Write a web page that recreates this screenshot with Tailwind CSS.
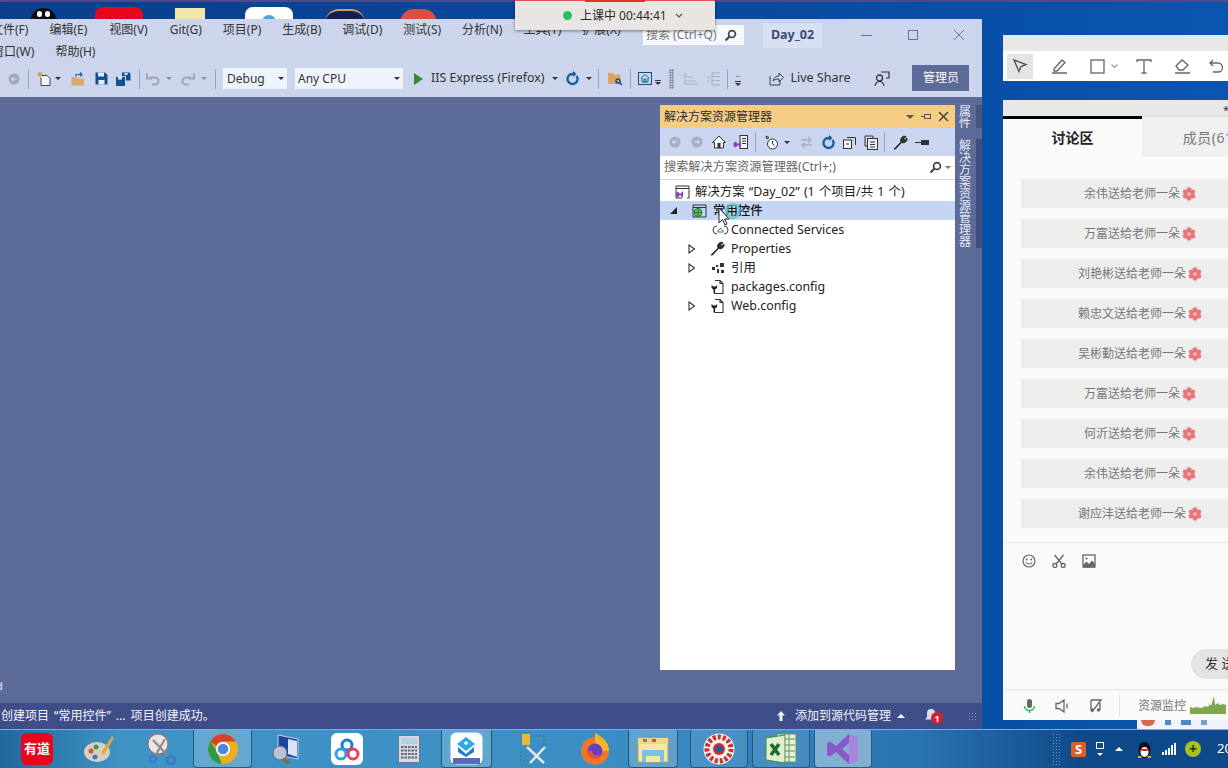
<!doctype html>
<html lang="zh-CN">
<head>
<meta charset="utf-8">
<title>Day_02 - Visual Studio</title>
<script src="https://cdn.jsdelivr.net/npm/@tailwindcss/browser@4"></script>
</head>
<body class="m-0 overflow-hidden">
<svg class="hidden">
  <symbol id="flower" viewBox="0 0 14 14">
    <g fill="#e8757a"><circle cx="7" cy="2.600" r="2.400"/><circle cx="7" cy="11.400" r="2.400"/><circle cx="3.200" cy="4.800" r="2.400"/><circle cx="10.800" cy="4.800" r="2.400"/><circle cx="3.200" cy="9.200" r="2.400"/><circle cx="10.800" cy="9.200" r="2.400"/><circle cx="7" cy="7" r="3.500"/></g>
    <circle cx="7" cy="7" r="1.800" fill="#f6c4bf"/>
  </symbol>
  <symbol id="config" viewBox="0 0 14 16">
    <path d="M5 1.500h5l3 3v10H4.500M10 1.500v3h3" fill="none" stroke="#333" stroke-width="1.100"/>
    <path d="M1.500 6v3l2 1.500v4h1.600v-4l2-1.500V6L5.600 7.500H3.400z" fill="#222"/>
  </symbol>
  <symbol id="tri" viewBox="0 0 8 10"><path d="M1 1l5.500 4L1 9z" fill="#fff" stroke="#333" stroke-width="1.100"/></symbol>
</svg>

<div class="relative w-[1228px] h-[768px] overflow-hidden bg-gradient-to-r from-[#0a3f8e] via-[#06489c] to-[#0a55ae] font-['Noto_Sans','Noto_Sans_CJK_SC',sans-serif]">
  <div class="h-[2px] bg-[#54468c]"></div>

  <!-- desktop icons peeking over the window -->
  <div class="absolute left-0 top-[2px] flex h-[17px] w-[480px] items-start overflow-hidden">
    <div class="ml-[30px] mt-[6px] flex h-[28px] w-[27px] justify-center gap-[3px] rounded-full bg-[#0b0b12] pt-[3px]"><span class="h-[6px] w-[5px] rounded-full bg-white"></span><span class="h-[6px] w-[5px] rounded-full bg-white"></span></div>
    <div class="ml-[38px] mt-[5px] h-[30px] w-[48px] rounded-lg bg-[#e8061c]"></div>
    <div class="ml-[32px] mt-[6px] h-[20px] w-[30px] bg-[#f2e6a8]"></div>
    <div class="ml-[40px] mt-[5px] flex h-[30px] w-[48px] justify-center rounded-lg bg-white pt-[8px]"><span class="h-[14px] w-[14px] rounded-full bg-[#4aa8e0]"></span></div>
    <div class="ml-[32px] mt-[7px] h-[28px] w-[40px] rounded-full border-t-2 border-[#c9a25a] bg-[#14204f]"></div>
    <div class="ml-[35px] mt-[7px] h-[28px] w-[37px] rounded-full bg-[#d8503f]"></div>
  </div>

  <!-- Visual Studio window -->
  <div class="absolute left-0 top-[19px] flex h-[710px] w-[982px] flex-col bg-[#5d6b99] text-[12px] text-[#2e3440]">
    <div class="relative h-[78px] shrink-0 bg-[#ccd5ec]">
      <div class="-ml-[9px] flex h-[20px] items-end gap-[21px] leading-[18px] text-[#333]">
        <span>文件(F)</span><span>编辑(E)</span><span class="pl-px">视图(V)</span><span class="pl-px">Git(G)</span><span>项目(P)</span><span>生成(B)</span><span>调试(D)</span><span>测试(S)</span><span>分析(N)</span><span>工具(T)</span><span>扩展(X)</span>
      </div>
      <div class="-ml-[8px] flex h-[22px] items-end gap-[21px] leading-[18px] text-[#333]">
        <span>窗口(W)</span><span>帮助(H)</span>
      </div>
      <div class="absolute left-[643px] top-[6px] flex h-[20px] w-[101px] items-center justify-between bg-[#f6f8fd] pl-[3px] pr-[7px] text-[#777]">
        <span>搜索 (Ctrl+Q)</span>
        <svg width="13" height="13" viewBox="0 0 13 13"><circle cx="8" cy="5" r="3.400" fill="none" stroke="#444" stroke-width="1.700"/><path d="M5.500 7.500L1.500 11.500" stroke="#444" stroke-width="2.200"/></svg>
      </div>
      <div class="absolute left-[763px] top-[4px] flex h-[25px] w-[59px] items-center justify-center bg-[#d7dff3] text-[12.5px] font-bold text-[#3b4a78]">Day_02</div>
      <div class="absolute left-[860px] top-[6px] flex w-[106px] items-center justify-between text-[#6a7596]">
        <svg width="14" height="20" viewBox="0 0 14 20"><path d="M1 10.500h11" stroke="currentColor"/></svg>
        <svg width="12" height="20" viewBox="0 0 12 20"><rect x="1.500" y="5.500" width="9" height="9" fill="none" stroke="currentColor"/></svg>
        <svg width="14" height="20" viewBox="0 0 14 20"><path d="M2 5l10 10M12 5L2 15" stroke="currentColor"/></svg>
      </div>

      <!-- standard toolbar -->
      <div class="absolute left-0 top-[49px] flex h-[21px] w-full items-center text-[#333]">
        <svg class="ml-[8px]" width="12" height="12" viewBox="0 0 12 12"><circle cx="6" cy="6" r="5.500" fill="#a4a9b8"/><path d="M8.500 6h-5M5.500 4L3.500 6l2 2" stroke="#e2e5ee" fill="none"/></svg>
        <span class="ml-[8px] h-[20px] w-px bg-[#99a3bf]"></span>
        <svg class="ml-[8px]" width="15" height="16" viewBox="0 0 15 16"><path d="M5 4.500h5l3 3v7H4v-8" fill="#f4f6fb" stroke="#444"/><path d="M3 1v5M.5 3.500h5M1 1.500l4 4M5 1.500l-4 4" stroke="#c8912c"/></svg>
        <span class="ml-[3px] border-x-[3px] border-t-[3px] border-x-transparent border-t-[#333]"></span>
        <svg class="ml-[10px]" width="15" height="14" viewBox="0 0 15 14"><path d="M.5 5h5l1 1.500h6.500v7H.5z" fill="#dcaa6c"/><path d="M5 4.500V2.500h6M9 .5l2 2-2 2" stroke="#1a6aa8" fill="none" stroke-width="1.200"/></svg>
        <svg class="ml-[9px]" width="13" height="13" viewBox="0 0 13 13"><path d="M.5.500h9.500l2.500 2.500v9.500H.5z" fill="#10528f"/><rect x="3" y=".5" width="6" height="4" fill="#e6ecf8"/><rect x="3.500" y="8" width="6" height="4.500" fill="#e6ecf8"/></svg>
        <svg class="ml-[8px]" width="15" height="14" viewBox="0 0 15 14"><path d="M0 5h9v9H0z" fill="#10528f"/><path d="M6 .5h7.500l1 1v7H10V4H6z" fill="#10528f"/><rect x="2" y="5" width="4" height="2.500" fill="#e6ecf8"/><rect x="8.500" y="1" width="3" height="2" fill="#e6ecf8"/></svg>
        <span class="ml-[8px] h-[20px] w-px bg-[#99a3bf]"></span>
        <svg class="ml-[6px]" width="14" height="14" viewBox="0 0 14 14"><path d="M4 5.500h5a3.500 3.500 0 0 1 0 7H6M1 1.500v5h5" fill="none" stroke="#a0a6b8" stroke-width="2"/></svg>
        <span class="ml-[6px] border-x-[3px] border-t-[3px] border-x-transparent border-t-[#8a90a4]"></span>
        <svg class="ml-[9px]" width="14" height="14" viewBox="0 0 14 14"><path d="M10 5.500H5a3.500 3.500 0 0 0 0 7h3M13 1.500v5H8" fill="none" stroke="#a0a6b8" stroke-width="2"/></svg>
        <span class="ml-[6px] border-x-[3px] border-t-[3px] border-x-transparent border-t-[#8a90a4]"></span>
        <span class="ml-[8px] h-[20px] w-px bg-[#99a3bf]"></span>
        <div class="ml-[7px] flex h-[21px] w-[64px] items-center justify-between bg-[#eff3fb] pl-[4px] pr-[3px]"><span>Debug</span><span class="border-x-[3px] border-t-[3px] border-x-transparent border-t-[#333]"></span></div>
        <div class="ml-[8px] flex h-[21px] w-[108px] items-center justify-between bg-[#eff3fb] pl-[3px] pr-[3px]"><span>Any CPU</span><span class="border-x-[3px] border-t-[3px] border-x-transparent border-t-[#333]"></span></div>
        <span class="ml-[11px] border-y-[6px] border-l-[9px] border-y-transparent border-l-[#2f8a3c]"></span>
        <span class="ml-[8px] whitespace-nowrap text-[12.4px]">IIS Express (Firefox)</span>
        <span class="ml-[8px] border-x-[3px] border-t-[3px] border-x-transparent border-t-[#333]"></span>
        <svg class="ml-[7px]" width="14" height="15" viewBox="0 0 14 15"><path d="M11.500 5A5 5 0 1 1 7 3H10" fill="none" stroke="#0d5fa8" stroke-width="2.300"/><path d="M8 0l3.500 3L8 6z" fill="#0d5fa8"/></svg>
        <span class="ml-[7px] border-x-[3px] border-t-[3px] border-x-transparent border-t-[#333]"></span>
        <span class="ml-[6px] h-[20px] w-px bg-[#99a3bf]"></span>
        <svg class="ml-[9px]" width="15" height="14" viewBox="0 0 15 14"><path d="M0 1h5l1 1.500h6.500V12H0z" fill="#dca55e"/><circle cx="10" cy="9" r="2" fill="none" stroke="#10528f" stroke-width="1.400"/><path d="M11.500 10.500L14 13" stroke="#10528f" stroke-width="1.500"/></svg>
        <span class="ml-[7px] h-[20px] w-px bg-[#99a3bf]"></span>
        <svg class="ml-[7px]" width="14" height="13" viewBox="0 0 14 13"><rect x=".5" y=".5" width="13" height="12" fill="none" stroke="#174f80"/><path d="M7 2.500L3 6h1v4h6V6h1zM6 7h2v3H6z" fill="none" stroke="#1a6aa8"/></svg>
        <span class="ml-[3px] mt-[6px] flex h-[7px] w-[6px] flex-col justify-end"><span class="h-px w-full bg-[#333]"></span><span class="mt-px border-x-[3px] border-t-[3px] border-x-transparent border-t-[#333]"></span></span>
        <span class="ml-[8px] h-[20px] w-[5px] bg-[radial-gradient(#7d869f_1px,transparent_1px)] bg-[length:2.500px_2.500px]"></span>
        <svg class="ml-[10px]" width="15" height="14" viewBox="0 0 15 14"><path d="M1 1v11h13M3 5h6M3 9h9M1 3l2 2" fill="none" stroke="#a8aebf"/></svg>
        <svg class="ml-[7px]" width="15" height="14" viewBox="0 0 15 14"><path d="M14 1H6v12h8M6 4.500h8M6 8.500h8M1 5h3M1 9h3" fill="none" stroke="#a8aebf"/></svg>
        <span class="ml-[6px] h-[20px] w-px bg-[#99a3bf]"></span>
        <span class="ml-[6px] flex w-[7px] flex-col items-center gap-[4px]"><span class="text-[8px] leading-[6px] text-[#333]">..</span><span class="h-px w-[6px] bg-[#333]"></span><span class="-mt-[3px] border-x-[3px] border-t-[3px] border-x-transparent border-t-[#333]"></span></span>
        <svg class="ml-[28px]" width="15" height="15" viewBox="0 0 15 15"><path d="M1 5v9h10V9M4 10c.5-3 3-5 6-5V2l4.500 4.500L10 11V8c-2.500 0-4.500.5-6 2z" fill="none" stroke="#3c4252"/></svg>
        <span class="ml-[6px] whitespace-nowrap text-[12.5px]">Live Share</span>
        <svg class="ml-[24px]" width="16" height="16" viewBox="0 0 16 16"><circle cx="5.500" cy="7" r="3" fill="none" stroke="#333" stroke-width="1.300"/><path d="M1 15c.5-3 2.200-4.500 4.500-4.500S9.500 12 10 15M7 1h8v6h-3" fill="none" stroke="#333" stroke-width="1.200"/></svg>
        <div class="ml-[22px] -mt-[2px] flex h-[26px] w-[57px] items-center justify-center bg-[#5d6b99] text-white">管理员</div>
      </div>
    </div>

    <div class="relative flex min-h-0 flex-1">
      <!-- empty document well -->
      <div class="relative w-[660px] shrink-0">
        <span class="absolute bottom-[37px] -left-[4px] text-[11px] leading-[12px] text-[#e8ecf6]">d</span>
      </div>

      <!-- solution explorer -->
      <div class="mt-[8px] mb-[59px] flex w-[295px] shrink-0 flex-col bg-white">
        <div class="flex h-[23px] shrink-0 items-center bg-[#f5cc84] pl-[4px] pr-[6px] text-[#2c2c2c]">
          <span class="flex-1">解决方案资源管理器</span>
          <span class="border-x-[4px] border-t-[4px] border-x-transparent border-t-[#555]"></span>
          <svg class="ml-[7px]" width="11" height="11" viewBox="0 0 11 11"><path d="M0 5.500h3M3.500 3v5M3.500 3.500h6M3.500 7.500h6M9.500 3v5" fill="none" stroke="#555"/></svg>
          <svg class="ml-[6px]" width="11" height="11" viewBox="0 0 11 11"><path d="M1 1l9 9M10 1l-9 9" stroke="#444" stroke-width="1.500"/></svg>
        </div>
        <div class="flex h-[28px] shrink-0 items-center bg-[#ccd5f0] pl-[9px]">
          <svg width="12" height="12" viewBox="0 0 12 12"><circle cx="6" cy="6" r="5.500" fill="#a8aebf"/><path d="M8.500 6h-5M5.500 4L3.500 6l2 2" stroke="#e2e5ee" fill="none"/></svg>
          <svg class="ml-[10px]" width="12" height="12" viewBox="0 0 12 12"><circle cx="6" cy="6" r="5.500" fill="#a8aebf"/><path d="M3.500 6h5M6.500 4l2 2-2 2" stroke="#e2e5ee" fill="none"/></svg>
          <svg class="ml-[9px]" width="14" height="14" viewBox="0 0 14 14"><path d="M7 1L.5 7.500H2.500V13h9V7.500h2z" fill="#f4f6fb" stroke="#333"/><rect x="5.500" y="8" width="3" height="5" fill="#333"/></svg>
          <svg class="ml-[7px]" width="15" height="14" viewBox="0 0 15 14"><rect x="7" y=".5" width="7.500" height="13" fill="#f4f6fb" stroke="#333"/><path d="M9 3.500h4M9 6h4M9 8.500h4" stroke="#333"/><path d="M.5 8l2-1.500L5 9l3-3v7l-3-3-2.500 2.500-2-1.500z" fill="#8a3ec0"/></svg>
          <span class="ml-[7px] h-[20px] w-px bg-[#99a3bf]"></span>
          <svg class="ml-[9px]" width="15" height="15" viewBox="0 0 15 15"><circle cx="7.500" cy="9" r="5" fill="#f4f6fb" stroke="#333"/><path d="M7.500 6v3l2 1.500M1 1l3 1.500L2 4z" fill="none" stroke="#333"/></svg>
          <span class="ml-[4px] border-x-[3px] border-t-[3px] border-x-transparent border-t-[#333]"></span>
          <svg class="ml-[10px]" width="13" height="13" viewBox="0 0 13 13"><path d="M1 4h9M8 1l3 3-3 3M12 9H3M5 6L2 9l3 3" fill="none" stroke="#a8aebf" stroke-width="1.300"/></svg>
          <svg class="ml-[8px]" width="14" height="15" viewBox="0 0 14 15"><path d="M11.500 5A5 5 0 1 1 7 3H10" fill="none" stroke="#0d5fa8" stroke-width="2.300"/><path d="M8 0l3.500 3L8 6z" fill="#0d5fa8"/></svg>
          <svg class="ml-[8px]" width="13" height="13" viewBox="0 0 13 13"><rect x=".5" y="4" width="8" height="8.500" fill="#eef1f8" stroke="#333"/><path d="M4 1.500h8.500V9M3 8h3" fill="none" stroke="#333"/></svg>
          <svg class="ml-[8px]" width="14" height="15" viewBox="0 0 14 15"><path d="M1 1h8v2M1 1v10h2" fill="none" stroke="#333"/><rect x="3.500" y="3.500" width="10" height="11" fill="#eef1f8" stroke="#333"/><path d="M6 7h5M6 9.500h5M6 12h5" stroke="#333"/></svg>
          <span class="ml-[6px] h-[20px] w-px bg-[#99a3bf]"></span>
          <svg class="ml-[8px]" width="15" height="15" viewBox="0 0 15 15"><path d="M1 14l7-7a4 4 0 0 1 5-5.500L10.500 4l1 1L14 3a4 4 0 0 1-5.500 4.500L2.500 14z" fill="#2c2c2c" stroke="#2c2c2c"/></svg>
          <svg class="ml-[7px]" width="15" height="7" viewBox="0 0 15 7"><path d="M0 3.500h6" stroke="#333"/><rect x="6" y="1" width="8" height="5" fill="#333"/></svg>
        </div>
        <div class="flex h-[24px] shrink-0 items-center justify-between border-b border-[#d0d6e6] bg-white pl-[4px] pr-[4px] text-[12.2px] text-[#666]">
          <span>搜索解决方案资源管理器(Ctrl+;)</span>
          <span class="flex items-center gap-[3px]">
            <svg width="13" height="13" viewBox="0 0 13 13"><circle cx="8" cy="5" r="3.400" fill="none" stroke="#444" stroke-width="1.700"/><path d="M5.500 7.500L1.500 11.500" stroke="#444" stroke-width="2.200"/></svg>
            <span class="border-x-[3px] border-t-[3px] border-x-transparent border-t-[#777]"></span>
          </span>
        </div>

        <div class="relative pt-[2px] text-[12.4px] leading-[19px] text-[#222]">
          <div class="flex h-[19px] items-center pl-[15px]">
            <svg width="15" height="14" viewBox="0 0 15 14"><path d="M7 13H1V1h13v12h-2M1 3.500h13" fill="none" stroke="#333"/><path d="M1 8l2-1.500L5 9l3-3v7l-3-3-2 2.500L1 11z" fill="#8a3ec0"/></svg>
            <span class="ml-[5px] whitespace-nowrap [word-spacing:1px]">解决方案 “Day_02” (1 个项目/共 1 个)</span>
          </div>
          <div class="flex h-[19px] items-center bg-[#c5d6f4] pl-[10px]">
            <span class="mr-[8px] border-b-[7px] border-l-[7px] border-b-[#222] border-l-transparent"></span>
            <svg class="ml-[7px]" width="15" height="14" viewBox="0 0 15 14"><path d="M1 1h13v12H1zM1 3.500h13" fill="none" stroke="#333"/><circle cx="6" cy="8.500" r="4" fill="#5fbf6a" stroke="#1f7a30"/><path d="M2 8.500h8M6 4.500v8" stroke="#1f7a30"/></svg>
            <span class="ml-[6px] font-medium text-[#111]">常用控件</span>
          </div>
          <div class="flex h-[19px] items-center pl-[50px]">
            <svg width="21" height="14" viewBox="0 0 21 14"><path d="M7 3a4 4 0 1 0 0 8M14 3a4 4 0 1 1 0 8" fill="none" stroke="#444"/><path d="M10.500 5l-3 4h6z" fill="none" stroke="#2a9a3c"/></svg>
            <span>Connected Services</span>
          </div>
          <div class="flex h-[19px] items-center pl-[28px]">
            <svg width="8" height="10"><use href="#tri"/></svg>
            <svg class="ml-[14px]" width="15" height="15" viewBox="0 0 15 15"><path d="M1 14l7-7a4 4 0 0 1 5-5.500L10.500 4l1 1L14 3a4 4 0 0 1-5.500 4.500L2.500 14z" fill="#2c2c2c" stroke="#2c2c2c"/></svg>
            <span class="ml-[6px]">Properties</span>
          </div>
          <div class="flex h-[19px] items-center pl-[28px]">
            <svg width="8" height="10"><use href="#tri"/></svg>
            <svg class="ml-[15px]" width="14" height="12" viewBox="0 0 14 12"><path d="M9 1h4v4H9zM1 5h3v3H1zM6 7h2v4H6zM10 8h3v3h-3zM5 3h2v2H5z" fill="#333"/></svg>
            <span class="ml-[6px]">引用</span>
          </div>
          <div class="flex h-[19px] items-center pl-[50px]">
            <svg width="14" height="16"><use href="#config"/></svg>
            <span class="ml-[7px]">packages.config</span>
          </div>
          <div class="flex h-[19px] items-center pl-[28px]">
            <svg width="8" height="10"><use href="#tri"/></svg>
            <svg class="ml-[14px]" width="14" height="16"><use href="#config"/></svg>
            <span class="ml-[7px]">Web.config</span>
          </div>
          <!-- mouse pointer over the selected row -->
          <svg class="absolute left-[56px] top-[22px]" width="30" height="30" viewBox="0 0 30 30">
            <circle cx="17" cy="9" r="6.500" fill="none" stroke="#56c8c0" stroke-width="3" opacity=".75"/>
            <path d="M3 6v15l3.500-3.500L9 23l2-1-2.500-5H13z" fill="#fff" stroke="#223" stroke-width="1"/>
          </svg>
        </div>
      </div>

      <!-- auto-hide tabs -->
      <div class="mt-[8px] flex w-[27px] shrink-0 flex-col text-[12px] leading-[17px] text-[#e6ebf7]">
        <div class="flex h-[23px] justify-end bg-[#47567f]">
          <div class="mr-[6px] flex w-[21px] items-center overflow-hidden whitespace-nowrap bg-[#5d6b99] pr-[3px] [writing-mode:vertical-rl]">属性</div>
        </div>
        <div class="mt-[11px] flex h-[109px] justify-end bg-[#3f4e7e]">
          <div class="mr-[6px] flex w-[21px] items-center overflow-hidden whitespace-nowrap bg-[#5d6b99] pr-[3px] [writing-mode:vertical-rl]">解决方案资源管理器</div>
        </div>
      </div>

      <!-- status bar -->
      <div class="absolute inset-x-0 bottom-0 flex h-[26px] items-center bg-[#3f4d88] text-[#f2f4fa]">
        <span class="flex-1 whitespace-nowrap pl-px [word-spacing:2px]">创建项目 “常用控件” ... 项目创建成功。</span>
        <svg width="10" height="12" viewBox="0 0 10 12"><path d="M5 1L1 5.500h2.500V11h3V5.500H9z" fill="#eef1f8"/></svg>
        <span class="ml-[9px]">添加到源代码管理</span>
        <span class="ml-[6px] border-x-[4px] border-b-[4px] border-x-transparent border-b-white"></span>
        <span class="relative ml-[19px] h-[14px] w-[14px]">
          <svg width="14" height="14" viewBox="0 0 14 14"><path d="M7 0a4 4 0 0 1 4 4v4l2 2.500H1L3 8V4a4 4 0 0 1 4-4z" fill="#d8deec"/></svg>
          <span class="absolute left-[7px] top-[3px] flex h-[12px] w-[12px] items-center justify-center rounded-full bg-[#d61f2a] text-[9px] font-bold leading-[9px] text-white">1</span>
        </span>
        <span class="ml-[30px] mr-[5px] h-[9px] w-[9px] bg-[radial-gradient(#8a96bc_1px,transparent_1px)] bg-[length:3px_3px]"></span>
      </div>
    </div>
  </div>

  <!-- class timer -->
  <div class="absolute left-[515px] top-0 flex h-[30px] w-[200px] flex-col bg-[#e9e5e3] shadow-[0_1px_3px_rgba(0,0,0,0.45)]">
    <div class="flex h-px justify-center bg-[#e05050]"><span class="h-[2px] w-[60px] bg-[#e23030]"></span></div>
    <div class="flex flex-1 items-center pl-[48px] text-[12px] text-[#2a2a2a]">
      <span class="mr-[8px] h-[9px] w-[9px] rounded-full bg-[#22c064]"></span>
      <span class="whitespace-nowrap">上课中 00:44:41</span>
      <svg class="ml-[8px]" width="8" height="6" viewBox="0 0 8 6"><path d="M1 1l3 3 3-3" fill="none" stroke="#555" stroke-width="1.200"/></svg>
    </div>
  </div>

  <!-- whiteboard tools window -->
  <div class="absolute left-[1003px] top-[35px] flex h-[46px] w-[225px] flex-col overflow-hidden bg-white">
    <div class="h-[16px] bg-[#e8e8e8]"></div>
    <div class="flex flex-1 items-center pl-[4px] text-[#666]">
      <div class="flex h-[25px] w-[26px] shrink-0 items-center justify-center bg-[#e4e4e4]">
        <svg width="16" height="16" viewBox="0 0 16 16"><path d="M2 2l12 4.500-5 2-2 5z" fill="none" stroke="#555" stroke-width="1.400"/></svg>
      </div>
      <svg class="ml-[18px] shrink-0" width="17" height="16" viewBox="0 0 17 16"><path d="M3 11L11 2l3 2.500-8 8.500H3zM1 15h15" fill="none" stroke="#666" stroke-width="1.300"/></svg>
      <svg class="ml-[22px] shrink-0" width="15" height="15" viewBox="0 0 15 15"><rect x="1" y="1" width="13" height="13" fill="none" stroke="#666" stroke-width="1.300"/></svg>
      <svg class="ml-[6px] shrink-0" width="7" height="5" viewBox="0 0 7 5"><path d="M.5.500l3 3 3-3" fill="none" stroke="#999" stroke-width="1.200"/></svg>
      <svg class="ml-[18px] shrink-0" width="16" height="15" viewBox="0 0 16 15"><path d="M1 3V1h14v2M8 1v13M5.500 14h5" fill="none" stroke="#666" stroke-width="1.300"/></svg>
      <svg class="ml-[22px] shrink-0" width="17" height="16" viewBox="0 0 17 16"><path d="M2 8l6-6 6 5-5 5H5zM1 15h15" fill="none" stroke="#666" stroke-width="1.300"/></svg>
      <svg class="ml-[18px] shrink-0" width="15" height="15" viewBox="0 0 15 15"><path d="M4 1L1 4l3 3M1 4h8a4.500 4.500 0 0 1 0 9H4" fill="none" stroke="#666" stroke-width="1.300"/></svg>
    </div>
  </div>

  <!-- chat window -->
  <div class="absolute left-[1003px] top-[100px] flex h-[620px] w-[225px] flex-col overflow-hidden bg-[#fafafa]">
    <div class="flex h-[16px] shrink-0 justify-end bg-[#e8e8e8] text-[11px] leading-[20px] text-[#333]"><span class="-mr-[1px]">*</span></div>
    <div class="flex h-[41px] shrink-0 text-[14px]">
      <div class="flex w-[139px] shrink-0 items-center justify-center border-t-[3px] border-black bg-[#fafafa] pb-[2px] font-bold text-[#222]">讨论区</div>
      <div class="flex w-[140px] shrink-0 items-center justify-center border-t border-[#e0e0e0] bg-[#f0f0f0] pr-[3px] tracking-[0.5px] text-[#777]">成员(61)</div>
    </div>
    <div class="flex w-[238px] shrink-0 flex-col gap-[11px] pl-[18px] pt-[22px] text-[12px] text-[#777]">
      <div class="flex h-[29px] w-[238px] shrink-0 items-center justify-center gap-[2px] bg-[#ededed] pt-px">余伟送给老师一朵<svg width="14" height="14"><use href="#flower"/></svg></div>
      <div class="flex h-[29px] w-[238px] shrink-0 items-center justify-center gap-[2px] bg-[#ededed] pt-px">万富送给老师一朵<svg width="14" height="14"><use href="#flower"/></svg></div>
      <div class="flex h-[29px] w-[238px] shrink-0 items-center justify-center gap-[2px] bg-[#ededed] pt-px">刘艳彬送给老师一朵<svg width="14" height="14"><use href="#flower"/></svg></div>
      <div class="flex h-[29px] w-[238px] shrink-0 items-center justify-center gap-[2px] bg-[#ededed] pt-px">赖忠文送给老师一朵<svg width="14" height="14"><use href="#flower"/></svg></div>
      <div class="flex h-[29px] w-[238px] shrink-0 items-center justify-center gap-[2px] bg-[#ededed] pt-px">吴彬勤送给老师一朵<svg width="14" height="14"><use href="#flower"/></svg></div>
      <div class="flex h-[29px] w-[238px] shrink-0 items-center justify-center gap-[2px] bg-[#ededed] pt-px">万富送给老师一朵<svg width="14" height="14"><use href="#flower"/></svg></div>
      <div class="flex h-[29px] w-[238px] shrink-0 items-center justify-center gap-[2px] bg-[#ededed] pt-px">何沂送给老师一朵<svg width="14" height="14"><use href="#flower"/></svg></div>
      <div class="flex h-[29px] w-[238px] shrink-0 items-center justify-center gap-[2px] bg-[#ededed] pt-px">余伟送给老师一朵<svg width="14" height="14"><use href="#flower"/></svg></div>
      <div class="flex h-[29px] w-[238px] shrink-0 items-center justify-center gap-[2px] bg-[#ededed] pt-px">谢应沣送给老师一朵<svg width="14" height="14"><use href="#flower"/></svg></div>
    </div>
    <div class="mt-[14px] border-t border-[#ebebeb]"></div>
    <div class="flex h-[34px] shrink-0 items-center gap-[16px] pl-[19px] pt-[2px]">
      <svg width="14" height="14" viewBox="0 0 14 14"><circle cx="7" cy="7" r="6" fill="none" stroke="#666" stroke-width="1.200"/><circle cx="4.800" cy="5.500" r=".9" fill="#666"/><circle cx="9.200" cy="5.500" r=".9" fill="#666"/><path d="M4 8.500c1.500 2 4.500 2 6 0" fill="none" stroke="#666" stroke-width="1.200"/></svg>
      <svg width="14" height="14" viewBox="0 0 14 14"><circle cx="2.800" cy="11.500" r="2" fill="none" stroke="#666" stroke-width="1.300"/><circle cx="11.200" cy="11.500" r="2" fill="none" stroke="#666" stroke-width="1.300"/><path d="M4 10L11.500 1M10 10L2.500 1" stroke="#666" stroke-width="1.300"/></svg>
      <svg width="14" height="14" viewBox="0 0 14 14"><rect x="1" y="1" width="12" height="12" fill="none" stroke="#666" stroke-width="1.300"/><circle cx="4.500" cy="4.500" r="1.100" fill="#666"/><path d="M1 11l3.500-3.500L7 10l3-3.500 3 3.500v3.500H1z" fill="#666"/></svg>
    </div>
    <div class="flex flex-1 items-end pb-[10px] pl-[188px]">
      <div class="flex h-[30px] w-[80px] shrink-0 items-center rounded-full bg-[#e4e4e4] pl-[14px] text-[13px] text-[#333]">发 送</div>
    </div>
    <div class="flex h-[31px] shrink-0 items-center border-t border-[#e4e4e4] pl-[20px] pt-[2px] text-[12px] text-[#777]">
      <svg class="shrink-0" width="13" height="16" viewBox="0 0 13 16"><rect x="4" y="1" width="5" height="9" rx="2.500" fill="#666"/><path d="M1.500 8c0 6 10 6 10 0M6.500 12v3" fill="none" stroke="#2fbf4f" stroke-width="1.500"/></svg>
      <svg class="ml-[19px] shrink-0" width="15" height="14" viewBox="0 0 15 14"><path d="M1 4.500v5h3l5 3.500V1L4 4.500zM12 4.500v5" fill="none" stroke="#666" stroke-width="1.300"/></svg>
      <svg class="ml-[18px] shrink-0" width="14" height="14" viewBox="0 0 14 14"><path d="M4 13l9-12H3M3 1v9M12 4v7" fill="none" stroke="#666" stroke-width="1.300"/><circle cx="4" cy="11" r="1.700" fill="#666"/><circle cx="10.500" cy="11" r="1.700" fill="#666"/></svg>
      <span class="ml-[17px] h-[22px] w-px shrink-0 bg-[#e4e4e4]"></span>
      <span class="ml-[18px] whitespace-nowrap">资源监控</span>
      <svg class="ml-[4px] -mt-[2px] shrink-0" width="40" height="18" viewBox="0 0 40 18"><path d="M0 18V11l3 1 4-1 4 1 5-2 2 1 2-3 1 2 3-10 1 9 3-2 2 2 3-1 3 1v9z" fill="#7fa650"/></svg>
    </div>
  </div>

  <!-- window peeking out under the chat -->
  <div class="absolute left-[1137px] top-[720px] flex h-[9px] w-[91px] items-start gap-[10px] overflow-hidden bg-[#f0f4fa] pl-[4px]">
    <span class="h-[6px] w-[14px] rounded-b-full bg-[#d86a4a]"></span><span class="h-[5px] w-[6px] bg-[#4b8ac8]"></span><span class="h-[5px] w-[10px] bg-[#4b8ac8]"></span><span class="h-[5px] w-[6px] bg-[#7aa0d0]"></span>
  </div>

  <!-- taskbar -->
  <div class="absolute inset-x-0 bottom-0 flex h-[39px] items-center border-t border-[#dc8c96] bg-[linear-gradient(90deg,#22689c_0%,#3f94c6_10%,#3a8ec4_50%,#2a74b0_75%,#0e4a8a_88%,#0e4a8a_100%)] text-white">
    <div class="ml-[6px] flex h-[30px] w-[62px] shrink-0 items-center justify-center"><div class="flex h-[32px] w-[32px] items-center justify-center rounded-md bg-[#e8061c] text-[13px] font-bold">有道</div></div>
    <div class="flex w-[62px] shrink-0 items-center justify-center">
      <svg width="32" height="32" viewBox="0 0 32 32"><ellipse cx="14" cy="19" rx="13" ry="10" fill="#d9cfc0"/><circle cx="8" cy="18" r="2.500" fill="#d8503f"/><circle cx="13" cy="14" r="2.500" fill="#3c9a4c"/><circle cx="12" cy="24" r="2.500" fill="#3a78c8"/><path d="M18 20L29 3l2 2-10 17z" fill="#e0a64a"/></svg>
    </div>
    <div class="flex w-[62px] shrink-0 items-center justify-center">
      <svg width="32" height="32" viewBox="0 0 32 32"><circle cx="13" cy="11" r="10" fill="#e8e4e0" stroke="#b06060"/><path d="M8 7l16 17M20 6L10 23" stroke="#888" stroke-width="2"/><circle cx="26" cy="27" r="4" fill="none" stroke="#3a78c8" stroke-width="2.500"/><circle cx="8" cy="26" r="3" fill="none" stroke="#3a78c8" stroke-width="2"/></svg>
    </div>
    <div class="ml-px flex h-[38px] w-[59px] shrink-0 items-center justify-center rounded-b-sm border border-t-0 border-[#1c5a80] bg-white/20">
      <svg width="32" height="32" viewBox="0 0 32 32"><circle cx="16" cy="16" r="15" fill="#e8b020"/><path d="M16 1a15 15 0 0 1 13 7.500H16a7.500 7.500 0 0 0-7 4.500L3.500 8A15 15 0 0 1 16 1z" fill="#d8402f"/><path d="M1 16A15 15 0 0 1 3.500 8L10 19l5 12A15 15 0 0 1 1 16z" fill="#2f9a4a"/><circle cx="16" cy="16" r="7" fill="#fff"/><circle cx="16" cy="16" r="5.300" fill="#4a88e0"/></svg>
    </div>
    <div class="ml-[2px] flex w-[62px] shrink-0 items-center justify-center">
      <svg width="30" height="32" viewBox="0 0 30 32"><path d="M8 2l20 4v20L8 22z" fill="#1c46a0" stroke="#c8d0e0"/><path d="M18 6l9 2v16l-9-3z" fill="#d8e4f4"/><circle cx="10" cy="20" r="7" fill="#b8c4d4" stroke="#667"/><path d="M13 26l6 5" stroke="#8a6a30" stroke-width="3"/></svg>
    </div>
    <div class="flex w-[62px] shrink-0 items-center justify-center">
      <div class="flex h-[32px] w-[32px] items-center justify-center rounded-md bg-white">
        <svg width="26" height="24" viewBox="0 0 26 24"><circle cx="13" cy="8" r="5" fill="none" stroke="#1f7ad0" stroke-width="3"/><circle cx="7" cy="17" r="5" fill="none" stroke="#2fa0e0" stroke-width="3"/><circle cx="19" cy="17" r="5" fill="none" stroke="#e84060" stroke-width="3"/></svg>
      </div>
    </div>
    <div class="flex w-[62px] shrink-0 items-center justify-center">
      <svg width="22" height="28" viewBox="0 0 22 28"><rect x=".5" y=".5" width="21" height="27" fill="#d4dae2" stroke="#778"/><rect x="3" y="3" width="16" height="6" fill="#b4d0e4"/><path d="M3 12h16M3 15.500h16M3 19h16M3 22.500h16" stroke="#667" stroke-width="2" stroke-dasharray="2.500 1"/></svg>
    </div>
    <div class="ml-px flex h-[38px] w-[51px] shrink-0 items-center justify-center rounded-b-sm border border-t-0 border-[#1c5a80] bg-white/20">
      <svg width="33" height="33" viewBox="0 0 33 33"><rect x=".5" y=".5" width="32" height="32" rx="6" fill="#fff"/><path d="M16 5l9 7-9 7-9-7z" fill="#2fa8e8"/><path d="M14 11h4M16 9v4" stroke="#fff" stroke-width="1.500"/><path d="M8 15l8 7 8-7v5l-8 5-8-5z" fill="#1d7ec8"/><rect x="3" y="26" width="27" height="6" fill="#5a6ab8"/></svg>
    </div>
    <div class="ml-[10px] flex w-[62px] shrink-0 items-center justify-center">
      <svg width="32" height="32" viewBox="0 0 32 32"><rect x="5" y="1" width="8" height="11" fill="#e8b93c"/><path d="M14 3h13v13M4 18v10h10" fill="none" stroke="#2f8a3c" stroke-dasharray="2 2"/><path d="M10 14l17 16M28 14L13 30" stroke="#e8e8e8" stroke-width="2.500"/></svg>
    </div>
    <div class="flex w-[62px] shrink-0 items-center justify-center">
      <svg width="32" height="34" viewBox="0 0 32 34"><circle cx="16" cy="19" r="14" fill="#f0762a"/><path d="M16 1c6 3 14 8 14 18H16z" fill="#f5b528"/><circle cx="16" cy="19" r="7.500" fill="#6a3fc0"/><path d="M8 19a8 8 0 0 0 15 3c-3 3-10 2-10-3z" fill="#e8503a"/></svg>
    </div>
    <div class="ml-[2px] flex h-[38px] w-[50px] shrink-0 items-center justify-center rounded-b-sm border border-t-0 border-[#1c5a80] bg-white/20">
      <svg width="32" height="28" viewBox="0 0 32 28"><path d="M1 3h30v24H1z" fill="#f4e8a4" stroke="#b8a050"/><path d="M1 3h30v6H1z" fill="#e8d888"/><rect x="6" y="4" width="4" height="3" fill="#4fa050"/><rect x="15" y="4" width="4" height="3" fill="#d8503f"/><path d="M5 15h22v12H5z" fill="#7cc0e8"/><path d="M9 21h14v6H9z" fill="#f4e8a4"/></svg>
    </div>
    <div class="ml-[12px] flex h-[38px] w-[58px] shrink-0 items-center justify-center rounded-b-sm border border-t-0 border-[#1c5a80] bg-white/10">
      <svg width="32" height="32" viewBox="0 0 32 32"><circle cx="16" cy="16" r="15.500" fill="#f4f0ec"/><circle cx="16" cy="16" r="12" fill="none" stroke="#c8302c" stroke-width="5" stroke-dasharray="3 2"/><circle cx="16" cy="16" r="6" fill="#c8302c"/><circle cx="16" cy="16" r="3.500" fill="#1f5a9a"/></svg>
    </div>
    <div class="ml-[4px] flex h-[38px] w-[58px] shrink-0 items-center justify-center rounded-b-sm border border-t-0 border-[#1c5a80] bg-white/10">
      <svg width="32" height="32" viewBox="0 0 32 32"><rect x="12" y="1" width="19" height="28" fill="#e8f0dc" stroke="#5a9a50"/><path d="M18 6h12M18 12h12M18 18h12M18 24h12M24 1v28" stroke="#5a9a50"/><path d="M1 5l19-3v28L1 27z" fill="#dfeecf" stroke="#4a8a40"/><path d="M6 11l8 11M14 11L6 22" stroke="#1f6a2c" stroke-width="3.500"/></svg>
    </div>
    <div class="ml-[4px] flex h-[38px] w-[58px] shrink-0 items-center justify-center rounded-b-sm border border-t-0 border-[#1c5a80] bg-white/40">
      <svg width="32" height="32" viewBox="0 0 32 32"><path d="M22 1l9 4v22l-9 4-13-12-6 4.500-3-1.500V10l3-1.500 6 4.500zM22 10l-7 6 7 6z" fill="#8a58c8"/><path d="M22 1l9 4v22l-9 4z" fill="#a884dc"/></svg>
    </div>
    <div class="ml-[180px] flex shrink-0 items-center">
      <span class="h-[32px] w-[9px] bg-[radial-gradient(#6f95c0_1px,transparent_1px)] bg-[length:3px_3px]"></span>
      <div class="ml-[10px] flex h-[15px] w-[15px] items-center justify-center rounded-[2px] bg-[#d8602a] text-[13px] font-bold leading-none text-white">S</div>
      <span class="ml-[10px] flex w-[8px] flex-col items-center gap-[4px]"><span class="h-[7px] w-[8px] border border-white"></span><span class="border-x-[3px] border-t-[3px] border-x-transparent border-t-white"></span></span>
      <span class="ml-[11px] border-x-[4px] border-b-[4px] border-x-transparent border-b-white"></span>
      <svg class="ml-[14px]" width="15" height="17" viewBox="0 0 15 17"><ellipse cx="7.500" cy="9" rx="6" ry="8" fill="#111"/><ellipse cx="7.500" cy="11" rx="4" ry="5" fill="#fff"/><path d="M3 8h9l-2 2H5z" fill="#d82020"/><path d="M1 15h4l-1 2H1zM14 15h-4l1 2h3z" fill="#e8a020"/></svg>
      <svg class="ml-[9px]" width="15" height="12" viewBox="0 0 15 12"><path d="M1 9h2v3H1zM4 7h2v5H4zM7 5h2v7H7zM10 2h2v10h-2zM13 0h2v12h-2z" fill="#fff"/></svg>
      <span class="ml-[9px] flex h-[16px] w-[16px] items-center justify-center rounded-full bg-[#a8c020] text-[14px] font-bold leading-none text-[#1c3c10]">+</span>
      <span class="ml-[16px] whitespace-nowrap text-[13px]">20</span>
    </div>
  </div>
</div>
</body>
</html>
